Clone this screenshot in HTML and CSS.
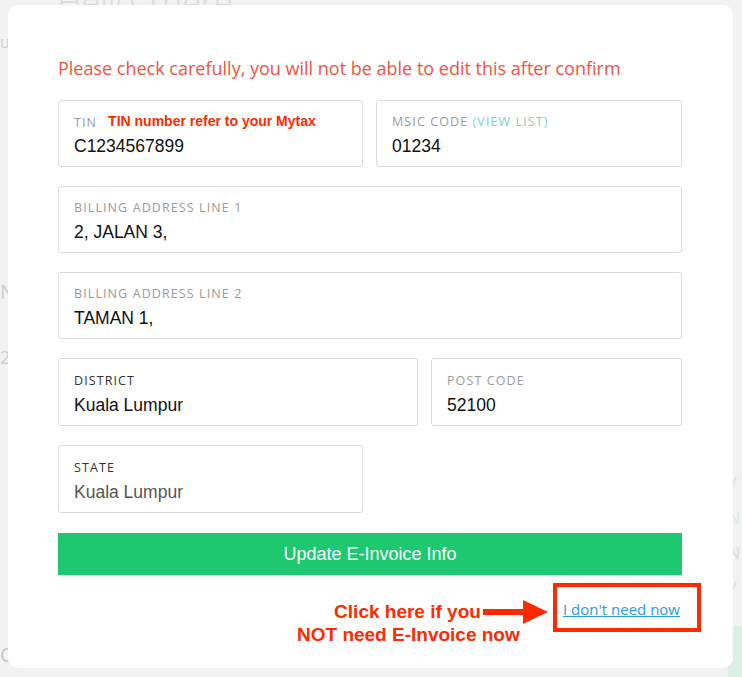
FILE: index.html
```html
<!DOCTYPE html>
<html lang="en">
<head>
<meta charset="utf-8">
<title>E-Invoice Info</title>
<link rel="stylesheet" href="styles.css">
</head>
<body>
<div class="page">
  <div class="page-left">
    <span class="bg-t bg-u">u</span>
    <span class="bg-t bg-n">N</span>
    <span class="bg-t bg-21">21</span>
    <span class="bg-t bg-c">C</span>
  </div>
  <div class="page-main">
    <h1 class="bg-title">Hello There</h1>
  </div>
  <div class="page-right">
    <span class="bg-r r-blue">Y</span>
    <span class="bg-r r-teal">N</span>
    <span class="bg-r r-grey">N</span>
    <span class="bg-r r-red">Y</span>
    <div class="bg-strip"></div>
  </div>
</div>

<div class="modal">
  <div class="form">
    <p class="warning">Please check carefully, you will not be able to edit this after confirm</p>

    <div class="row row-half">
      <div class="field">
        <div class="label-line"><span class="label">TIN</span><span class="hint">TIN number refer to your Mytax</span></div>
        <div class="value">C1234567899</div>
      </div>
      <div class="field">
        <div class="label-line"><span class="label">MSIC CODE <span class="view-list">(VIEW LIST)</span></span></div>
        <div class="value">01234</div>
      </div>
    </div>

    <div class="field">
      <div class="label-line"><span class="label">BILLING ADDRESS LINE 1</span></div>
      <div class="value">2, JALAN 3,</div>
    </div>

    <div class="field">
      <div class="label-line"><span class="label">BILLING ADDRESS LINE 2</span></div>
      <div class="value">TAMAN 1,</div>
    </div>

    <div class="row row-district">
      <div class="field field-tall">
        <div class="label-line"><span class="label label-dark">DISTRICT</span></div>
        <div class="value">Kuala Lumpur</div>
      </div>
      <div class="field field-tall">
        <div class="label-line"><span class="label">POST CODE</span></div>
        <div class="value">52100</div>
      </div>
    </div>

    <div class="row row-half">
      <div class="field field-tall">
        <div class="label-line"><span class="label label-dark">STATE</span></div>
        <div class="value value-muted">Kuala Lumpur</div>
      </div>
    </div>

    <button class="btn-update" type="button">Update E-Invoice Info</button>
  </div>

  <div class="footer">
    <div class="note">Click here if you<br>NOT need E-Invoice now</div>
    <svg class="arrow" width="65" height="24" viewBox="0 0 65 24" aria-hidden="true">
      <rect x="0" y="9" width="42" height="6" fill="#ff2a00"/>
      <polygon points="40,0 65,12 40,24" fill="#ff2a00"/>
    </svg>
    <div class="callout"><a class="skip-link" href="#">I don't need now</a></div>
  </div>
</div>
</body>
</html>
```

FILE: styles.css
```css
html, body {
  margin: 0;
  padding: 0;
}

body {
  background: #f2f2f2;
  width: 742px;
  height: 677px;
  overflow: hidden;
  position: relative;
  font-family: "Open Sans", "Liberation Sans", sans-serif;
}

/* ---------- backdrop page ---------- */
.page {
  display: flex;
  height: 677px;
}

.page-left {
  width: 57px;
  display: flex;
  flex-direction: column;
  flex-shrink: 0;
}

.bg-t {
  display: block;
  color: #cfcfcf;
}

.bg-u { font-size: 16px; line-height: 20px; margin-top: 32px; }
.bg-n { font-size: 20px; line-height: 24px; margin-top: 228px; }
.bg-21 { font-size: 18px; line-height: 22px; margin-top: 42px; }
.bg-c { font-size: 20px; line-height: 24px; margin-top: 275px; color: #c8c8c8; }

.page-main {
  flex: 1;
  overflow: hidden;
}

.bg-title {
  margin: -4px 0 0;
  height: 9px;
  overflow: hidden;
  font-size: 34px;
  line-height: 12px;
  font-weight: 300;
  color: #dadada;
}

.page-right {
  width: 14px;
  display: flex;
  flex-direction: column;
  flex-shrink: 0;
}

.bg-r {
  display: block;
  font-size: 16px;
  line-height: 35px;
}

.bg-r.r-blue { margin-top: 466px; color: #cfe0ea; }
.r-teal { color: #d3ebe4; }
.r-grey { color: #d9dbe0; }
.r-red { color: #f3d3cc; }

.bg-strip {
  margin-top: 20px;
  flex: 1;
  background: #dcefe5;
}

/* ---------- modal ---------- */
.modal {
  position: absolute;
  left: 8px;
  top: 5px;
  width: 725px;
  height: 663px;
  box-sizing: border-box;
  padding: 51px 51px 0 50px;
  background: #ffffff;
  border-radius: 10px;
}

.form {
  display: flex;
  flex-direction: column;
  gap: 19px;
}

.warning {
  margin: 0 0 1px;
  font-size: 18px;
  line-height: 24px;
  color: #f1553f;
}

.row {
  display: grid;
  column-gap: 13px;
}

.row-half {
  grid-template-columns: 305px 306px;
}

.row-district {
  grid-template-columns: 360px 251px;
}

.field {
  height: 67px;
  box-sizing: border-box;
  border: 1px solid #dcdcdc;
  border-radius: 3px;
  padding: 13px 15px 0;
}

.field-tall {
  height: 68px;
  padding-top: 14px;
}

.label-line {
  display: flex;
  align-items: baseline;
  height: 16px;
  line-height: 16px;
}

.label {
  font-size: 12.5px;
  letter-spacing: 1.1px;
  color: #9b9b9b;
  white-space: nowrap;
}

.label-dark {
  color: #333333;
}

.view-list {
  color: #7fd1c5;
}

.hint {
  margin-left: 11px;
  font-family: "Liberation Sans", Arial, sans-serif;
  font-weight: bold;
  font-size: 14px;
  letter-spacing: 0;
  color: #ff2a00;
  position: relative;
  top: -1px;
}

.value {
  margin-top: 4px;
  font-family: "Liberation Sans", Arial, sans-serif;
  font-size: 17.5px;
  line-height: 24px;
  color: #111111;
}

.value-muted {
  color: #555555;
}

.btn-update {
  height: 42px;
  margin-top: 1px;
  border: 0;
  border-radius: 0;
  padding: 0;
  background: #1dc871;
  color: #ffffff;
  font-family: "Liberation Sans", Arial, sans-serif;
  font-size: 18px;
  cursor: pointer;
}

/* ---------- footer annotation ---------- */
.footer {
  display: flex;
  justify-content: flex-end;
  align-items: flex-start;
  margin-top: 8px;
  margin-right: -19px;
}

.note {
  margin-top: 17px;
  width: 221px;
  text-align: center;
  font-family: "Liberation Sans", Arial, sans-serif;
  font-weight: bold;
  font-size: 19px;
  line-height: 23px;
  color: #ff2a00;
  white-space: nowrap;
}

.arrow {
  display: block;
  margin-top: 17px;
  margin-left: -35px;
  flex-shrink: 0;
}

.callout {
  margin-left: 5px;
  width: 148px;
  height: 49px;
  box-sizing: border-box;
  border: 4px solid #ff2a00;
  padding: 11px 0 0 6px;
}

.skip-link {
  font-size: 15px;
  line-height: 20px;
  color: #2a9cd9;
  text-decoration: underline;
  white-space: nowrap;
}
```
